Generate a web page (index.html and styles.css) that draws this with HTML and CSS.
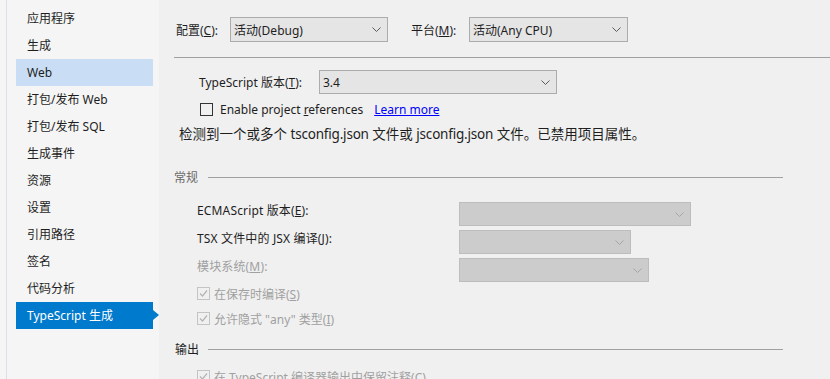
FILE: index.html
```html
<!DOCTYPE html>
<html lang="zh-CN">
<head>
<meta charset="utf-8">
<title>TypeScript 生成</title>
<link rel="stylesheet" href="styles.css">
</head>
<body>
<div class="app">
  <nav class="sidebar">
    <div class="nav-item">应用程序</div>
    <div class="nav-item">生成</div>
    <div class="nav-item hover">Web</div>
    <div class="nav-item">打包/发布 Web</div>
    <div class="nav-item">打包/发布 SQL</div>
    <div class="nav-item">生成事件</div>
    <div class="nav-item">资源</div>
    <div class="nav-item">设置</div>
    <div class="nav-item">引用路径</div>
    <div class="nav-item">签名</div>
    <div class="nav-item">代码分析</div>
    <div class="nav-item active">TypeScript 生成</div>
  </nav>
  <main class="main">
    <div class="config-row">
      <span class="lbl lbl-config">配置(<u>C</u>):</span>
      <div class="select sel-config"><span>活动(Debug)</span><svg class="chev" width="9" height="5" viewBox="0 0 9 5"><polyline points="0.5,0.5 4.5,4.5 8.5,0.5" fill="none" stroke="#5a5a5a" stroke-width="1"/></svg></div>
      <span class="lbl lbl-platform">平台(<u>M</u>):</span>
      <div class="select sel-platform"><span>活动(Any CPU)</span><svg class="chev" width="9" height="5" viewBox="0 0 9 5"><polyline points="0.5,0.5 4.5,4.5 8.5,0.5" fill="none" stroke="#5a5a5a" stroke-width="1"/></svg></div>
    </div>
    <div class="divider top-divider"></div>
    <div class="ts-row">
      <span class="lbl lbl-ts">TypeScript 版本(<u>T</u>):</span>
      <div class="select sel-ts"><span>3.4</span><svg class="chev" width="9" height="5" viewBox="0 0 9 5"><polyline points="0.5,0.5 4.5,4.5 8.5,0.5" fill="none" stroke="#5a5a5a" stroke-width="1"/></svg></div>
    </div>
    <div class="check-row refs">
      <span class="box"></span>
      <span class="txt">Enable project <u>r</u>eferences</span>
      <a class="link" href="#">Learn more</a>
    </div>
    <div class="notice">检测到一个或多个 <span class="lat">tsconfig.json</span> 文件或 <span class="lat">jsconfig.json</span> 文件。已禁用项目属性。</div>

    <div class="section sec-general"><span class="sec-title gray">常规</span><span class="sec-line"></span></div>
    <div class="form-row">
      <span class="flbl">ECMAScript 版本(<u>E</u>):</span>
      <div class="select disabled w232"><svg class="chev" width="9" height="5" viewBox="0 0 9 5"><polyline points="0.5,0.5 4.5,4.5 8.5,0.5" fill="none" stroke="#a6a6a6" stroke-width="1"/></svg></div>
    </div>
    <div class="form-row">
      <span class="flbl">TSX 文件中的 JSX 编译(<u>J</u>):</span>
      <div class="select disabled w172"><svg class="chev" width="9" height="5" viewBox="0 0 9 5"><polyline points="0.5,0.5 4.5,4.5 8.5,0.5" fill="none" stroke="#a6a6a6" stroke-width="1"/></svg></div>
    </div>
    <div class="form-row">
      <span class="flbl dim">模块系统(<u>M</u>):</span>
      <div class="select disabled w190"><svg class="chev" width="9" height="5" viewBox="0 0 9 5"><polyline points="0.5,0.5 4.5,4.5 8.5,0.5" fill="none" stroke="#a6a6a6" stroke-width="1"/></svg></div>
    </div>
    <div class="check-row dis first-dis">
      <span class="box dbox"><svg width="11" height="11" viewBox="0 0 11 11"><polyline points="2,5.5 4.5,8 9,2.5" fill="none" stroke="#b4b4b4" stroke-width="1.2"/></svg></span>
      <span class="txt dim">在保存时编译(<u>S</u>)</span>
    </div>
    <div class="check-row dis">
      <span class="box dbox"><svg width="11" height="11" viewBox="0 0 11 11"><polyline points="2,5.5 4.5,8 9,2.5" fill="none" stroke="#b4b4b4" stroke-width="1.2"/></svg></span>
      <span class="txt dim">允许隐式 "any" 类型(<u>I</u>)</span>
    </div>
    <div class="section sec-output"><span class="sec-title">输出</span><span class="sec-line"></span></div>
    <div class="check-row dis last-dis">
      <span class="box dbox"><svg width="11" height="11" viewBox="0 0 11 11"><polyline points="2,5.5 4.5,8 9,2.5" fill="none" stroke="#b4b4b4" stroke-width="1.2"/></svg></span>
      <span class="txt dim">在 TypeScript 编译器输出中保留注释(<u>C</u>)</span>
    </div>
  </main>
</div>
</body>
</html>
```
FILE: styles.css
```css
* { box-sizing: border-box; }
html, body {
  margin: 0;
  padding: 0;
  height: 100%;
  overflow: hidden;
}
body {
  font-family: "Noto Sans", "Noto Sans CJK SC", sans-serif;
  font-size: 12px;
  color: #1e1e1e;
  background: #f0f0f0;
}
u { text-decoration: underline; text-underline-offset: 1px; }
.app {
  display: flex;
  height: 379px;
}
.sidebar {
  width: 159px;
  flex: none;
  background: #f5f5f5;
  padding: 5px 6px 0 10px;
  border-left: 6px solid #f5f5f5;
  position: relative;
  box-shadow: inset 1px 0 0 #dedee8;
}
.nav-item {
  height: 27px;
  line-height: 27px;
  padding-left: 11px;
  width: 137px;
  white-space: nowrap;
  position: relative;
}
.nav-item.hover { background: #c9def5; }
.nav-item.active { background: #007acc; color: #fff; }
.nav-item.active::after {
  content: "";
  position: absolute;
  right: -6px;
  top: 8px;
  border-left: 6px solid #007acc;
  border-top: 5.5px solid transparent;
  border-bottom: 5.5px solid transparent;
}
.main {
  flex: 1;
  position: relative;
  padding-top: 17px;
}
.config-row {
  display: flex;
  align-items: center;
  height: 25px;
  padding-left: 17px;
}
.lbl { white-space: nowrap; }
.lbl-config { width: 54px; }
.lbl-platform { width: 58px; margin-left: 23px; }
.select {
  height: 25px;
  background: #e5e5e5;
  border: 1px solid #acacac;
  display: flex;
  align-items: center;
  justify-content: space-between;
  padding: 0 6px 0 3px;
  white-space: nowrap;
}
.select .chev { flex: none; margin-left: auto; }
.sel-config { width: 158px; }
.sel-platform { width: 159px; }
.top-divider {
  height: 1px;
  background: #a0a0a0;
  margin: 15px 0 0 15px;
}
.ts-row {
  display: flex;
  align-items: center;
  margin-top: 12px;
  padding-left: 40px;
}
.lbl-ts { width: 120px; }
.sel-ts { width: 238px; height: 24px; }
.check-row {
  display: flex;
  align-items: center;
  height: 13px;
  margin-top: 9px;
  padding-left: 41px;
}
.box {
  width: 13px;
  height: 13px;
  border: 1px solid #333;
  flex: none;
  display: flex;
  align-items: center;
  justify-content: center;
}
.check-row .txt { margin-left: 7px; white-space: nowrap; }
.link {
  margin-left: 11px;
  color: #0000ff;
  text-decoration: underline;
}
.notice {
  margin-top: 9px;
  padding-left: 20px;
  font-size: 13.5px;
  line-height: 18px;
  white-space: nowrap;
}
.notice .lat { letter-spacing: -0.2px; }
.section {
  display: flex;
  align-items: center;
  height: 16px;
}
.sec-general { margin-top: 26px; padding-left: 15px; }
.sec-title { white-space: nowrap; }
.sec-title.gray { color: #6a6a6a; }
.sec-line {
  height: 1px;
  background: #a0a0a0;
  margin-left: 10px;
  width: 575px;
}
.sec-output { margin-top: 16px; padding-left: 16px; }
.sec-output .sec-line { margin-left: 9px; }
.form-row {
  display: flex;
  align-items: flex-start;
  height: 24px;
  margin-top: 4px;
  padding-left: 38px;
}
.sec-general + .form-row { margin-top: 17px; }
.flbl {
  width: 262px;
  white-space: nowrap;
  line-height: 16px;
  padding-top: 1px;
  letter-spacing: 0.15px;
}
.dim { color: #a0a0a0; }
.select.disabled {
  background: #cccccc;
  border-color: #bdbdbd;
  height: 24px;
}
.w232 { width: 232px; }
.w172 { width: 172px; }
.w190 { width: 190px; }
.check-row.dis { padding-left: 38px; margin-top: 12px; }
.check-row.first-dis { margin-top: 5px; }
.dbox { border-color: #c4c4c4; }
.check-row.dis .txt { margin-left: 4px; }
.check-row.last-dis { margin-top: 13px; }
```
